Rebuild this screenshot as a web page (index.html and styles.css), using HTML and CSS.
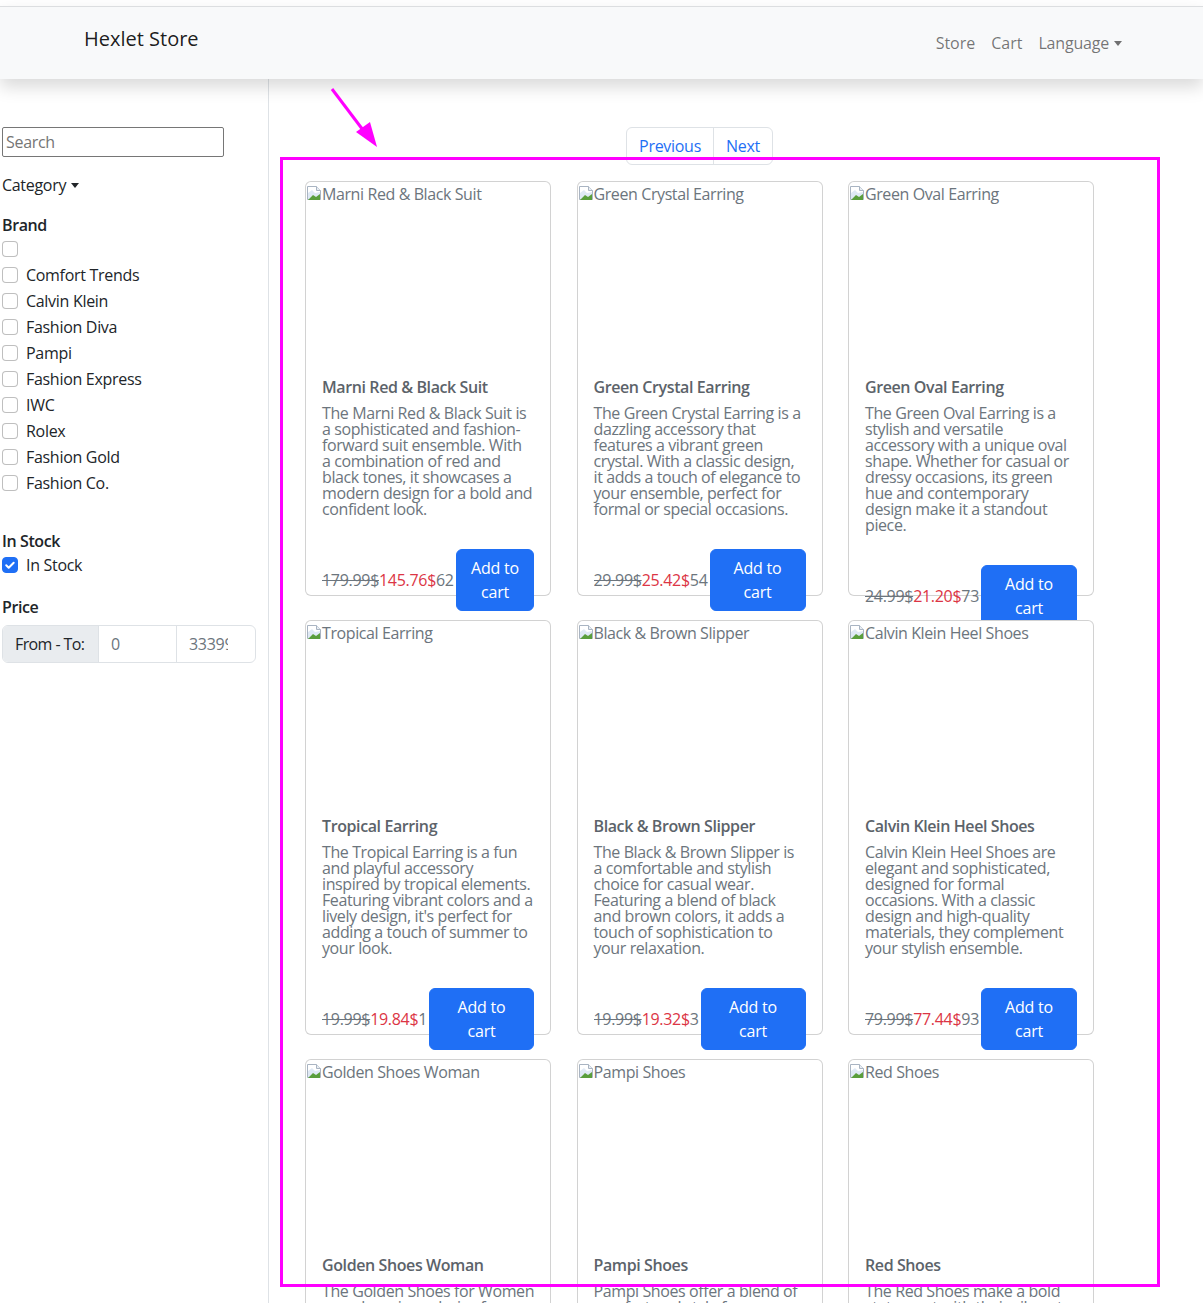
FILE: index.html
```html
<!DOCTYPE html>
<html lang="en">
<head>
<meta charset="utf-8">
<title>Hexlet Store</title>
<link rel="stylesheet" href="styles.css">
</head>
<body>
<header class="navbar">
  <a class="brand" href="#">Hexlet Store</a>
  <nav class="nav-links">
    <a href="#">Store</a>
    <a href="#">Cart</a>
    <a href="#" class="dropdown">Language</a>
  </nav>
</header>

<div class="layout">
  <aside class="sidebar">
    <input class="search" type="text" placeholder="Search">
    <div class="category dropdown">Category</div>
    <div class="side-heading brand-heading">Brand</div>
    <ul class="checks">
      <li><span class="box"></span></li>
      <li><span class="box"></span>Comfort Trends</li>
      <li><span class="box"></span>Calvin Klein</li>
      <li><span class="box"></span>Fashion Diva</li>
      <li><span class="box"></span>Pampi</li>
      <li><span class="box"></span>Fashion Express</li>
      <li><span class="box"></span>IWC</li>
      <li><span class="box"></span>Rolex</li>
      <li><span class="box"></span>Fashion Gold</li>
      <li><span class="box"></span>Fashion Co.</li>
    </ul>
    <div class="side-heading stock-heading">In Stock</div>
    <ul class="checks">
      <li><span class="box checked"><svg viewBox="0 0 16 16" width="16" height="16"><path d="M4.2 8.3l2.5 2.5 5-5" fill="none" stroke="#fff" stroke-width="2" stroke-linecap="round" stroke-linejoin="round"/></svg></span>In Stock</li>
    </ul>
    <div class="side-heading price-heading">Price</div>
    <div class="input-group">
      <span class="ig-label">From - To:</span>
      <span class="ig-input ig-from">0</span>
      <span class="ig-input ig-to"><span class="ig-val">33399</span></span>
    </div>
  </aside>

  <main class="main">
    <div class="pager-row">
      <div class="pager"><a href="#">Previous</a><a href="#">Next</a></div>
    </div>
    <div class="grid">
      <div class="card">
        <div class="img"><svg class="broken" viewBox="0 0 16 16" width="16" height="16"><path d="M1.5 1.5h9l4 4v9h-13z" fill="#fff" stroke="#a9b4c2"/><path d="M10.5 1.5v4h4" fill="#e8edf3" stroke="#a9b4c2"/><path d="M2 8l4-3 3 3 5-1v7H2z" fill="#dfe9f5"/><path d="M2 15l5-5 3 2 4-3v6z" fill="#5a9e3c"/></svg>Marni Red &amp; Black Suit</div>
        <div class="body">
          <div class="title">Marni Red &amp; Black Suit</div>
          <p class="desc">The Marni Red &amp; Black Suit is<br>a sophisticated and fashion-<br>forward suit ensemble. With<br>a combination of red and<br>black tones, it showcases a<br>modern design for a bold and<br>confident look.</p>
          <div class="foot"><span class="price p134"><s>179.99$</s><span class="new">145.76$</span>62</span><button class="btn">Add to cart</button></div>
        </div>
      </div>
      <div class="card">
        <div class="img"><svg class="broken" viewBox="0 0 16 16" width="16" height="16"><path d="M1.5 1.5h9l4 4v9h-13z" fill="#fff" stroke="#a9b4c2"/><path d="M10.5 1.5v4h4" fill="#e8edf3" stroke="#a9b4c2"/><path d="M2 8l4-3 3 3 5-1v7H2z" fill="#dfe9f5"/><path d="M2 15l5-5 3 2 4-3v6z" fill="#5a9e3c"/></svg>Green Crystal Earring</div>
        <div class="body">
          <div class="title">Green Crystal Earring</div>
          <p class="desc">The Green Crystal Earring is a<br>dazzling accessory that<br>features a vibrant green<br>crystal. With a classic design,<br>it adds a touch of elegance to<br>your ensemble, perfect for<br>formal or special occasions.</p>
          <div class="foot"><span class="price p116"><s>29.99$</s><span class="new">25.42$</span>54</span><button class="btn">Add to cart</button></div>
        </div>
      </div>
      <div class="card">
        <div class="img"><svg class="broken" viewBox="0 0 16 16" width="16" height="16"><path d="M1.5 1.5h9l4 4v9h-13z" fill="#fff" stroke="#a9b4c2"/><path d="M10.5 1.5v4h4" fill="#e8edf3" stroke="#a9b4c2"/><path d="M2 8l4-3 3 3 5-1v7H2z" fill="#dfe9f5"/><path d="M2 15l5-5 3 2 4-3v6z" fill="#5a9e3c"/></svg>Green Oval Earring</div>
        <div class="body">
          <div class="title">Green Oval Earring</div>
          <p class="desc">The Green Oval Earring is a<br>stylish and versatile<br>accessory with a unique oval<br>shape. Whether for casual or<br>dressy occasions, its green<br>hue and contemporary<br>design make it a standout<br>piece.</p>
          <div class="foot"><span class="price p116"><s>24.99$</s><span class="new">21.20$</span>73</span><button class="btn">Add to cart</button></div>
        </div>
      </div>
      <div class="card">
        <div class="img"><svg class="broken" viewBox="0 0 16 16" width="16" height="16"><path d="M1.5 1.5h9l4 4v9h-13z" fill="#fff" stroke="#a9b4c2"/><path d="M10.5 1.5v4h4" fill="#e8edf3" stroke="#a9b4c2"/><path d="M2 8l4-3 3 3 5-1v7H2z" fill="#dfe9f5"/><path d="M2 15l5-5 3 2 4-3v6z" fill="#5a9e3c"/></svg>Tropical Earring</div>
        <div class="body">
          <div class="title">Tropical Earring</div>
          <p class="desc">The Tropical Earring is a fun<br>and playful accessory<br>inspired by tropical elements.<br>Featuring vibrant colors and a<br>lively design, it's perfect for<br>adding a touch of summer to<br>your look.</p>
          <div class="foot"><span class="price p107"><s>19.99$</s><span class="new">19.84$</span>1</span><button class="btn">Add to cart</button></div>
        </div>
      </div>
      <div class="card">
        <div class="img"><svg class="broken" viewBox="0 0 16 16" width="16" height="16"><path d="M1.5 1.5h9l4 4v9h-13z" fill="#fff" stroke="#a9b4c2"/><path d="M10.5 1.5v4h4" fill="#e8edf3" stroke="#a9b4c2"/><path d="M2 8l4-3 3 3 5-1v7H2z" fill="#dfe9f5"/><path d="M2 15l5-5 3 2 4-3v6z" fill="#5a9e3c"/></svg>Black &amp; Brown Slipper</div>
        <div class="body">
          <div class="title">Black &amp; Brown Slipper</div>
          <p class="desc">The Black &amp; Brown Slipper is<br>a comfortable and stylish<br>choice for casual wear.<br>Featuring a blend of black<br>and brown colors, it adds a<br>touch of sophistication to<br>your relaxation.</p>
          <div class="foot"><span class="price p107"><s>19.99$</s><span class="new">19.32$</span>3</span><button class="btn">Add to cart</button></div>
        </div>
      </div>
      <div class="card">
        <div class="img"><svg class="broken" viewBox="0 0 16 16" width="16" height="16"><path d="M1.5 1.5h9l4 4v9h-13z" fill="#fff" stroke="#a9b4c2"/><path d="M10.5 1.5v4h4" fill="#e8edf3" stroke="#a9b4c2"/><path d="M2 8l4-3 3 3 5-1v7H2z" fill="#dfe9f5"/><path d="M2 15l5-5 3 2 4-3v6z" fill="#5a9e3c"/></svg>Calvin Klein Heel Shoes</div>
        <div class="body">
          <div class="title">Calvin Klein Heel Shoes</div>
          <p class="desc">Calvin Klein Heel Shoes are<br>elegant and sophisticated,<br>designed for formal<br>occasions. With a classic<br>design and high-quality<br>materials, they complement<br>your stylish ensemble.</p>
          <div class="foot"><span class="price p116"><s>79.99$</s><span class="new">77.44$</span>93</span><button class="btn">Add to cart</button></div>
        </div>
      </div>
      <div class="card">
        <div class="img"><svg class="broken" viewBox="0 0 16 16" width="16" height="16"><path d="M1.5 1.5h9l4 4v9h-13z" fill="#fff" stroke="#a9b4c2"/><path d="M10.5 1.5v4h4" fill="#e8edf3" stroke="#a9b4c2"/><path d="M2 8l4-3 3 3 5-1v7H2z" fill="#dfe9f5"/><path d="M2 15l5-5 3 2 4-3v6z" fill="#5a9e3c"/></svg>Golden Shoes Woman</div>
        <div class="body">
          <div class="title">Golden Shoes Woman</div>
          <p class="desc">The Golden Shoes for Women<br>are a luxurious choice for<br>special occasions.</p>
        </div>
      </div>
      <div class="card">
        <div class="img"><svg class="broken" viewBox="0 0 16 16" width="16" height="16"><path d="M1.5 1.5h9l4 4v9h-13z" fill="#fff" stroke="#a9b4c2"/><path d="M10.5 1.5v4h4" fill="#e8edf3" stroke="#a9b4c2"/><path d="M2 8l4-3 3 3 5-1v7H2z" fill="#dfe9f5"/><path d="M2 15l5-5 3 2 4-3v6z" fill="#5a9e3c"/></svg>Pampi Shoes</div>
        <div class="body">
          <div class="title">Pampi Shoes</div>
          <p class="desc">Pampi Shoes offer a blend of<br>comfort and style for<br>everyday wear.</p>
        </div>
      </div>
      <div class="card">
        <div class="img"><svg class="broken" viewBox="0 0 16 16" width="16" height="16"><path d="M1.5 1.5h9l4 4v9h-13z" fill="#fff" stroke="#a9b4c2"/><path d="M10.5 1.5v4h4" fill="#e8edf3" stroke="#a9b4c2"/><path d="M2 8l4-3 3 3 5-1v7H2z" fill="#dfe9f5"/><path d="M2 15l5-5 3 2 4-3v6z" fill="#5a9e3c"/></svg>Red Shoes</div>
        <div class="body">
          <div class="title">Red Shoes</div>
          <p class="desc">The Red Shoes make a bold<br>statement with their vibrant<br>color.</p>
        </div>
      </div>
    </div>
  </main>
</div>

<svg class="annot" width="1203" height="1303" viewBox="0 0 1203 1303">
  <rect x="281.5" y="158.5" width="877" height="1127" fill="none" stroke="#ff00ff" stroke-width="3"/>
  <line x1="332" y1="89" x2="366" y2="134" stroke="#ff00ff" stroke-width="3"/>
  <polygon points="356,132 370,122 377,147" fill="#ff00ff"/>
</svg>
</body>
</html>
```

FILE: styles.css
```css
* { box-sizing: border-box; }

html, body {
  margin: 0;
  padding: 0;
  background: #fff;
}

body {
  font-family: "Open Sans", "Noto Sans", sans-serif;
  font-size: 16px;
  color: #212529;
  letter-spacing: -0.3px;
  position: relative;
  overflow: hidden;
  height: 1303px;
}

a { text-decoration: none; }

.navbar {
  margin-top: 6px;
  height: 73px;
  border-top: 1px solid #dcdee0;
  background: #f8f9fa;
  box-shadow: 0 8px 16px rgba(0, 0, 0, 0.15);
  display: flex;
  align-items: flex-start;
  justify-content: space-between;
  padding: 0 81px 0 84px;
  position: relative;
  z-index: 2;
  letter-spacing: 0;
}

.brand {
  margin-top: 18px;
  font-size: 20px;
  line-height: 28px;
  color: rgba(0, 0, 0, 0.9);
}

.nav-links {
  margin-top: 24px;
  display: flex;
  gap: 16px;
}

.nav-links a {
  color: rgba(0, 0, 0, 0.55);
  line-height: 24px;
}

.nav-links .dropdown { letter-spacing: -0.2px; }

.dropdown::after {
  content: "";
  display: inline-block;
  margin-left: 5px;
  vertical-align: 3px;
  border-top: 5px solid currentColor;
  border-left: 4px solid transparent;
  border-right: 4px solid transparent;
}

.layout {
  display: flex;
  min-height: 1230px;
}

.sidebar {
  width: 269px;
  flex: none;
  border-right: 1px solid #dee2e6;
  padding: 48px 0 0 2px;
}

.search {
  display: block;
  width: 222px;
  height: 30px;
  margin: 0;
  border: 1px solid #767676;
  border-radius: 2px;
  padding: 0 3px;
  font-family: inherit;
  font-size: 16px;
  letter-spacing: -0.3px;
  color: #212529;
}

.search::placeholder { color: #757575; }

.category {
  margin-top: 16px;
  line-height: 24px;
}

.side-heading {
  font-weight: 600;
  font-size: 16px;
  line-height: 24px;
  letter-spacing: -0.4px;
}

.brand-heading { margin-top: 16px; }
.stock-heading { margin-top: 34px; }
.price-heading { margin-top: 18px; }

.checks {
  list-style: none;
  margin: 0;
  padding: 0;
}

.checks li {
  display: flex;
  align-items: center;
  height: 24px;
  margin-bottom: 2px;
  line-height: 24px;
}

.box {
  width: 16px;
  height: 16px;
  flex: none;
  border: 1px solid rgba(0, 0, 0, 0.25);
  border-radius: 4px;
  margin-right: 8px;
  background: #fff;
  display: flex;
}

.box.checked {
  background: #1f6ff5;
  border-color: #1f6ff5;
}

.box.checked svg { margin: -1px; }

.input-group {
  margin-top: 6px;
  display: flex;
  width: 254px;
  height: 38px;
  border: 1px solid #dee2e6;
  border-radius: 6px;
  overflow: hidden;
}

.ig-label {
  width: 96px;
  flex: none;
  background: #e9ecef;
  border-right: 1px solid #dee2e6;
  padding: 0 0 0 12px;
  line-height: 36px;
  color: #212529;
  white-space: nowrap;
  letter-spacing: -0.6px;
}

.ig-input {
  padding: 0 12px;
  line-height: 36px;
  color: #6c757d;
  white-space: nowrap;
}

.ig-from {
  width: 78px;
  flex: none;
  border-right: 1px solid #dee2e6;
}

.ig-to { flex: 1; }

.ig-val {
  display: block;
  width: 39px;
  overflow: hidden;
}

.main {
  flex: 1;
  padding: 48px 0 0 36px;
}

.pager-row {
  width: 789px;
  display: flex;
  justify-content: center;
}

.pager {
  display: flex;
  border: 1px solid #dee2e6;
  border-radius: 6px;
}

.pager a {
  color: #1f6ff5;
  padding: 0 12px;
  line-height: 36px;
}

.pager a + a { border-left: 1px solid #dee2e6; }

.grid {
  margin-top: 16px;
  display: grid;
  grid-template-columns: repeat(3, 246px);
  column-gap: 25.5px;
  row-gap: 24px;
}

.card {
  position: relative;
  height: 415px;
  border: 1px solid rgba(0, 0, 0, 0.176);
  border-radius: 6px;
  background: #fff;
}

.img {
  height: 180px;
  display: flex;
  align-items: flex-start;
  color: #6c757d;
  line-height: 24px;
  white-space: nowrap;
  overflow: hidden;
  letter-spacing: -0.4px;
}

.broken {
  flex: none;
  margin-top: 3px;
}

.body {
  padding: 16px;
}

.title {
  font-weight: 600;
  line-height: 19px;
  color: #5c636a;
  margin-bottom: 8px;
  white-space: nowrap;
  letter-spacing: -0.4px;
}

.desc {
  margin: 0 0 32px;
  line-height: 16px;
  color: #6c757d;
  white-space: nowrap;
  letter-spacing: -0.4px;
}

.foot {
  display: flex;
  align-items: center;
}

.price {
  flex: none;
  white-space: nowrap;
  overflow: hidden;
  color: #6c757d;
  line-height: 24px;
}

.price .new { color: #dc3545; }

.p134 { width: 134px; }
.p116 { width: 116px; }
.p107 { width: 107px; }

.btn {
  flex: 1;
  min-width: 0;
  border: 1px solid #1f6ff5;
  background: #1f6ff5;
  color: #fff;
  font-family: inherit;
  font-size: 16px;
  letter-spacing: -0.2px;
  line-height: 24px;
  padding: 6px 12px;
  border-radius: 6px;
}

.annot {
  position: absolute;
  left: 0;
  top: 0;
  pointer-events: none;
  z-index: 10;
}
```
